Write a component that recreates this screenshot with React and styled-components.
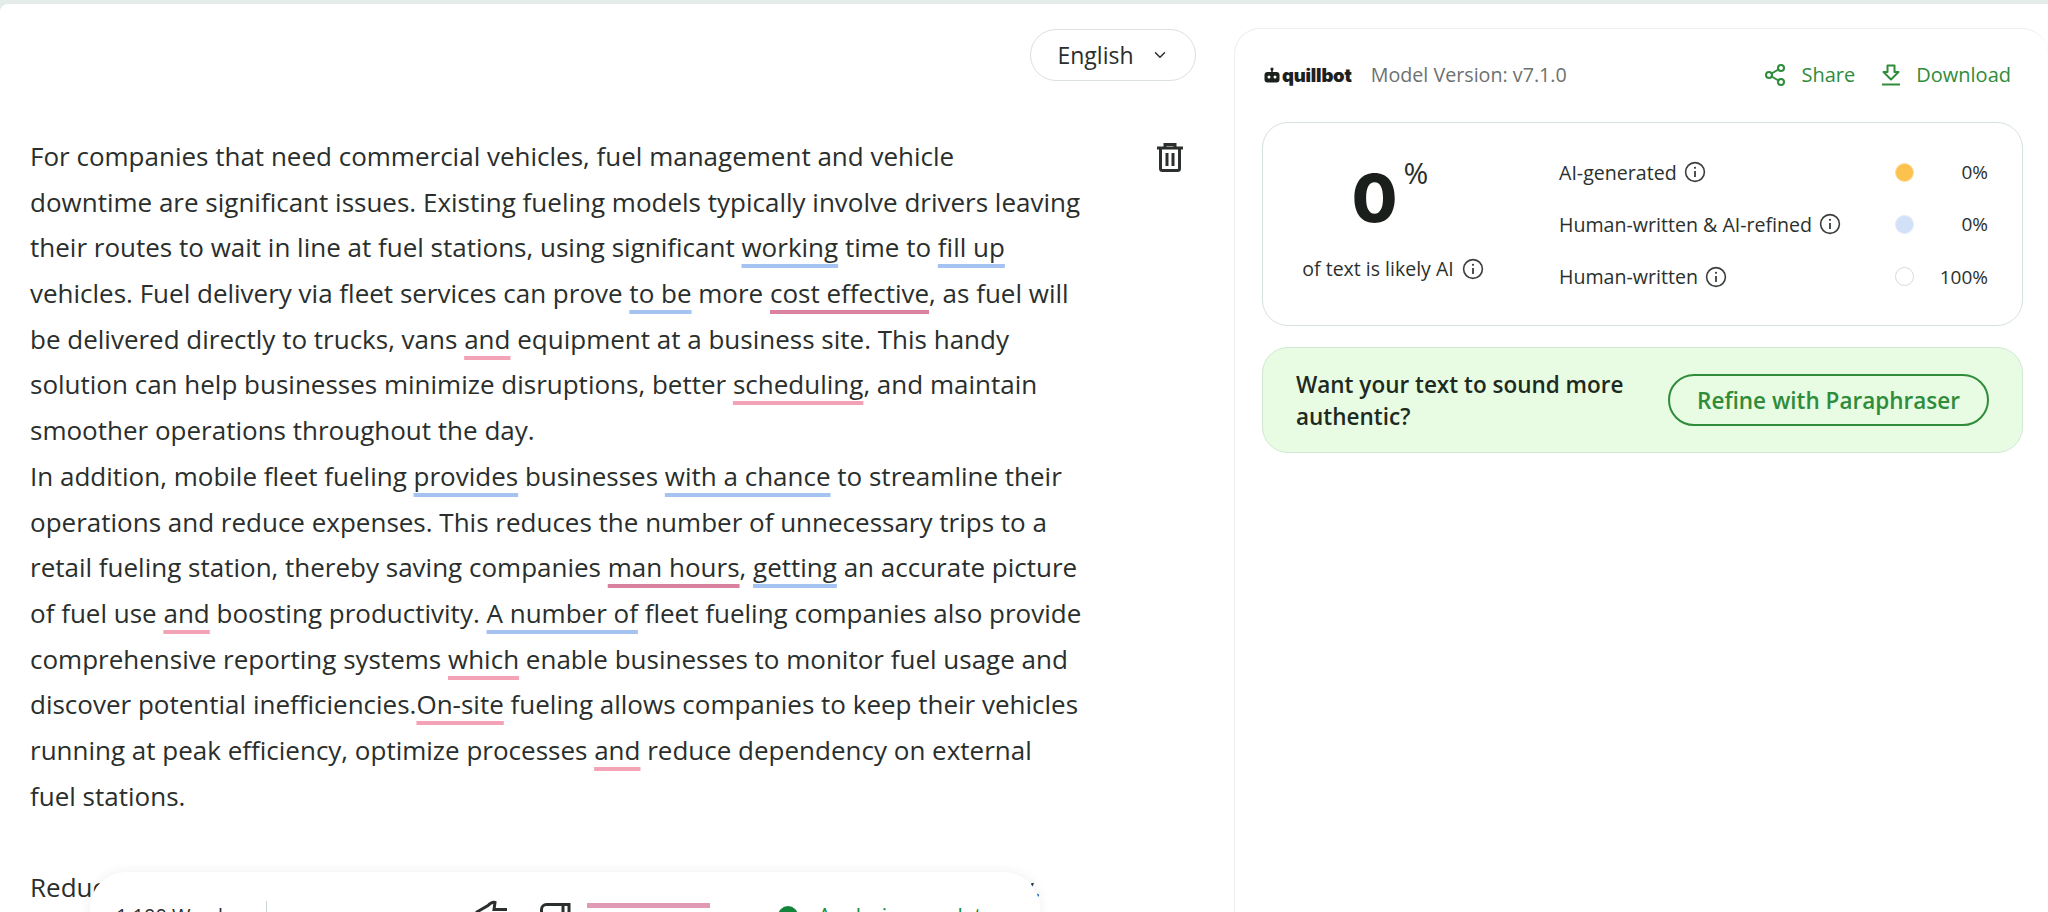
import React from 'react'
import styled, { createGlobalStyle } from 'styled-components'
import { ChevronDown, Share2 } from 'lucide-react'

const GlobalStyle = createGlobalStyle`
html, body {
    margin: 0;
    padding: 0;
    background-color: #ffffff;
}
body {
    font-family: "Open Sans", "Noto Sans", sans-serif;
    color: #2a2e2c;
}
* {
    box-sizing: border-box;
}
`

const colors = {
    blue: '#a5c3f1',
    rose: '#d9829f',
    pink: '#f3a3b5',
}

const Page = styled.div`
width: 2048px;
height: 912px;
overflow: hidden;
display: flex;
flex-direction: column;
background-color: #e4ecea;
`

const Main = styled.div`
flex: 1;
margin-top: 4px;
display: flex;
background-color: #ffffff;
border-top-left-radius: 8px;
min-height: 0;
`

const LeftPane = styled.section`
position: relative;
flex: 0 0 1234px;
padding: 25px 38px 0 30px;
`

const LangRow = styled.div`
display: flex;
justify-content: flex-end;
margin-bottom: 53px;
`

const LangButton = styled.button`
width: 166px;
height: 52px;
display: flex;
align-items: center;
justify-content: center;
gap: 17px;
font-family: inherit;
font-size: 23px;
color: #2a2e2c;
background: #ffffff;
border: 1.5px solid #dbe1de;
border-radius: 26px;
`

const Editor = styled.div`
display: flex;
justify-content: space-between;
align-items: flex-start;
`

const TextBlock = styled.div`
font-size: 26px;
line-height: 45.7px;
white-space: nowrap;
`

const Line = styled.div`
height: 45.7px;
`

const Mark = styled.span`
text-decoration: underline;
text-decoration-color: ${(p) => colors[p.$tone]};
text-decoration-thickness: 4px;
text-decoration-skip-ink: none;
text-underline-offset: 7px;
`

const TrashButton = styled.span`
display: block;
width: 28px;
height: 30px;
margin: 8px 12px 0 0;
color: #2b302d;
`

const FloatBar = styled.div`
position: absolute;
left: 90px;
top: 868px;
width: 950px;
height: 120px;
padding: 28px 0 0 26px;
display: flex;
align-items: flex-start;
background-color: #ffffff;
border-radius: 36px;
box-shadow: 0 0 12px rgba(30, 50, 40, 0.08);
font-size: 20px;
`

const WordCount = styled.span`
width: 151px;
height: 30px;
line-height: 30px;
border-right: 1px solid #c9d6d0;
color: #2b302d;
margin-top: 1px;
white-space: nowrap;
`

const BarIcons = styled.div`
display: flex;
gap: 33px;
margin-left: 208px;
color: #2b302d;
`

const PinkBar = styled.div`
width: 123px;
height: 5px;
margin: 3px 0 0 15px;
background-color: #e09ab6;
`

const Status = styled.div`
display: flex;
align-items: flex-start;
gap: 20px;
margin: 3px 0 0 68px;
color: #1c8a3c;
font-size: 21px;
line-height: 27px;
`

const StatusDot = styled.span`
width: 20px;
height: 20px;
margin-top: 3px;
border-radius: 50%;
background-color: #12853a;
`

const RightPane = styled.aside`
flex: 1;
margin-top: 24px;
padding: 0 25px 0 27px;
border: 1px solid #ecefee;
border-bottom: none;
border-right: none;
border-top-left-radius: 26px;
border-top-right-radius: 26px;
`

const Header = styled.header`
height: 93px;
display: flex;
align-items: center;
padding-bottom: 2px;
`

const Logo = styled.div`
display: flex;
align-items: center;
gap: 2px;
margin-left: 2px;
`

const LogoText = styled.span`
font-family: Inter, sans-serif;
font-weight: 900;
font-size: 18.5px;
letter-spacing: -0.2px;
color: #1c211e;
`

const Version = styled.span`
margin-left: 19px;
font-size: 19.7px;
color: #6d716f;
`

const HeaderActions = styled.div`
margin-left: auto;
margin-right: 12px;
display: flex;
align-items: center;
gap: 26px;
`

const ActionLink = styled.a`
display: flex;
align-items: center;
gap: 15px;
font-size: 20px;
font-weight: 500;
color: #2f8c3b;
`

const ScoreCard = styled.div`
height: 204px;
display: flex;
border: 1.5px solid #d6e2de;
border-radius: 26px;
`

const ScoreLeft = styled.div`
width: 260px;
display: flex;
flex-direction: column;
align-items: center;
padding-top: 30px;
`

const ScoreValue = styled.div`
display: flex;
align-items: flex-start;
height: 90px;
padding-right: 6px;
`

const ZeroDigit = styled.span`
font-family: Inter, sans-serif;
font-weight: 800;
font-size: 66px;
line-height: 90px;
color: #1a1f1c;
`

const PercentSign = styled.span`
font-size: 30px;
line-height: 34px;
margin: 3px 0 0 6px;
color: #2b302d;
`

const ScoreCaption = styled.div`
display: flex;
align-items: center;
gap: 8px;
margin-top: 12px;
font-size: 19.5px;
color: #2b302d;
`

const Rows = styled.div`
flex: 1;
display: flex;
flex-direction: column;
padding: 35px 34px 0 36px;
gap: 24.3px;
`

const Row = styled.div`
height: 28px;
display: flex;
align-items: center;
font-size: 19.6px;
color: #2b302d;
`

const RowLabel = styled.span`
display: flex;
align-items: center;
gap: 7px;
flex: 1;
`

const Dot = styled.span`
width: 19px;
height: 19px;
border-radius: 50%;
background-color: ${(p) => p.$fill};
border: 1px solid ${(p) => p.$line};
`

const RowValue = styled.span`
width: 74px;
text-align: right;
font-weight: 500;
font-size: 19px;
`

const PromoCard = styled.div`
height: 106px;
margin-top: 21px;
display: flex;
align-items: center;
justify-content: space-between;
padding: 2px 33px 0 33px;
background-color: #e8fbe3;
border: 1.5px solid #d3e8d5;
border-radius: 26px;
`

const PromoText = styled.p`
margin: 0;
width: 350px;
font-size: 22.5px;
font-weight: 600;
line-height: 32px;
color: #1d2a20;
`

const RefineButton = styled.button`
width: 321px;
height: 52px;
margin-top: -2px;
font-family: inherit;
font-size: 22.5px;
font-weight: 600;
color: #2f8c3b;
background: transparent;
border: 2px solid #2f8c3b;
border-radius: 26px;
`

const InfoIcon = () => (
    <svg width="22" height="22" viewBox="0 0 22 22" fill="none" stroke="#3a3f3c" strokeWidth="1.6">
        <circle cx="11" cy="11" r="9.4" />
        <path d="M11 10v6" strokeWidth="1.8" />
        <circle cx="11" cy="6.8" r="1.1" fill="#3a3f3c" stroke="none" />
    </svg>
)

const TrashIcon = () => (
    <svg width="28" height="30" viewBox="0 0 28 30" fill="none" stroke="currentColor" strokeWidth="3">
        <path d="M1 6h26M9 5V2.5h10V5" />
        <path d="M4.5 6v20.5a2 2 0 0 0 2 2h15a2 2 0 0 0 2-2V6" />
        <path d="M11 11v13M17 11v13" />
    </svg>
)

const DownloadIcon = () => (
    <svg width="20" height="22" viewBox="0 0 20 22" fill="none" stroke="currentColor" strokeWidth="2" strokeLinejoin="round">
        <path d="M6.5 1.5h7v6.5h4L10 15.5 2.5 8h4z" />
        <path d="M1 20.5h18" />
    </svg>
)

const RobotIcon = () => (
    <svg width="16" height="16" viewBox="0 0 16 16">
        <circle cx="8" cy="2" r="1.6" fill="#1c211e" />
        <rect x="7.2" y="2" width="1.6" height="3" fill="#1c211e" />
        <rect x="0.5" y="5" width="15" height="10.5" rx="3" fill="#1c211e" />
        <circle cx="5" cy="10" r="1.5" fill="#ffffff" />
        <circle cx="11" cy="10" r="1.5" fill="#ffffff" />
    </svg>
)

const ThumbIcon = () => (
    <svg width="32" height="32" viewBox="0 0 32 32" fill="none" stroke="currentColor" strokeWidth="3">
        <path d="M1 12.5 13 5.5Q17 1.5 20 2.5L19 9.5H32" />
    </svg>
)

const CopyIcon = () => (
    <svg width="32" height="32" viewBox="0 0 32 32" fill="none" stroke="currentColor" strokeWidth="3">
        <path d="M1.5 30V9.5a5 5 0 0 1 5-5H29V30" />
        <path d="M23 4.5V30" />
    </svg>
)

const App = () => {
    return (
        <Page>
            <GlobalStyle />
            <Main>
                <LeftPane>
                    <LangRow>
                        <LangButton>
                            English
                            <ChevronDown size={18} strokeWidth={2} />
                        </LangButton>
                    </LangRow>
                    <Editor>
                        <TextBlock>
                            <Line>For companies that need commercial vehicles, fuel management and vehicle</Line>
                            <Line>downtime are significant issues. Existing fueling models typically involve drivers leaving</Line>
                            <Line>their routes to wait in line at fuel stations, using significant <Mark $tone="blue">working</Mark> time to <Mark $tone="blue">fill up</Mark></Line>
                            <Line>vehicles. Fuel delivery via fleet services can prove <Mark $tone="blue">to be</Mark> more <Mark $tone="rose">cost effective</Mark>, as fuel will</Line>
                            <Line>be delivered directly to trucks, vans <Mark $tone="pink">and</Mark> equipment at a business site. This handy</Line>
                            <Line>solution can help businesses minimize disruptions, better <Mark $tone="pink">scheduling</Mark>, and maintain</Line>
                            <Line>smoother operations throughout the day.</Line>
                            <Line>In addition, mobile fleet fueling <Mark $tone="blue">provides</Mark> businesses <Mark $tone="blue">with a chance</Mark> to streamline their</Line>
                            <Line>operations and reduce expenses. This reduces the number of unnecessary trips to a</Line>
                            <Line>retail fueling station, thereby saving companies <Mark $tone="rose">man hours</Mark>, <Mark $tone="blue">getting</Mark> an accurate picture</Line>
                            <Line>of fuel use <Mark $tone="pink">and</Mark> boosting productivity. <Mark $tone="blue">A number of</Mark> fleet fueling companies also provide</Line>
                            <Line>comprehensive reporting systems <Mark $tone="pink">which</Mark> enable businesses to monitor fuel usage and</Line>
                            <Line>discover potential inefficiencies.<Mark $tone="pink">On-site</Mark> fueling allows companies to keep their vehicles</Line>
                            <Line>running at peak efficiency, optimize processes <Mark $tone="pink">and</Mark> reduce dependency on external</Line>
                            <Line>fuel stations.</Line>
                            <Line />
                            <Line>Reducing downtime and fuel waste is another big advantage of on-site fuel delivery.</Line>
                        </TextBlock>
                        <TrashButton><TrashIcon /></TrashButton>
                    </Editor>
                    <FloatBar>
                        <WordCount>1,100 Words</WordCount>
                        <BarIcons>
                            <ThumbIcon />
                            <CopyIcon />
                        </BarIcons>
                        <PinkBar />
                        <Status>
                            <StatusDot />
                            Analysis complete
                        </Status>
                    </FloatBar>
                </LeftPane>
                <RightPane>
                    <Header>
                        <Logo>
                            <RobotIcon />
                            <LogoText>quillbot</LogoText>
                        </Logo>
                        <Version>Model Version: v7.1.0</Version>
                        <HeaderActions>
                            <ActionLink><Share2 size={24} strokeWidth={2} />Share</ActionLink>
                            <ActionLink><DownloadIcon />Download</ActionLink>
                        </HeaderActions>
                    </Header>
                    <ScoreCard>
                        <ScoreLeft>
                            <ScoreValue>
                                <ZeroDigit>0</ZeroDigit>
                                <PercentSign>%</PercentSign>
                            </ScoreValue>
                            <ScoreCaption>of text is likely AI <InfoIcon /></ScoreCaption>
                        </ScoreLeft>
                        <Rows>
                            <Row>
                                <RowLabel>AI-generated <InfoIcon /></RowLabel>
                                <Dot $fill="#fdc24e" $line="#f6dfa8" />
                                <RowValue>0%</RowValue>
                            </Row>
                            <Row>
                                <RowLabel>Human-written &amp; AI-refined <InfoIcon /></RowLabel>
                                <Dot $fill="#d3e1f8" $line="#e2ebf9" />
                                <RowValue>0%</RowValue>
                            </Row>
                            <Row>
                                <RowLabel>Human-written <InfoIcon /></RowLabel>
                                <Dot $fill="#ffffff" $line="#d6dcd9" />
                                <RowValue>100%</RowValue>
                            </Row>
                        </Rows>
                    </ScoreCard>
                    <PromoCard>
                        <PromoText>Want your text to sound more authentic?</PromoText>
                        <RefineButton>Refine with Paraphraser</RefineButton>
                    </PromoCard>
                </RightPane>
            </Main>
        </Page>
    )
}

export default App
